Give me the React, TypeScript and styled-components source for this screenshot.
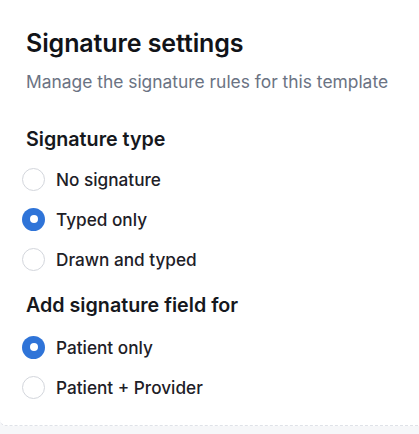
import React, { useState } from "react";
import styled, { createGlobalStyle } from "styled-components";

const Global = createGlobalStyle`
  html, body { margin: 0; padding: 0; background: #f6f7f9; }
  body { font-family: Inter, "Noto Sans", sans-serif; -webkit-font-smoothing: antialiased; }
  * { box-sizing: border-box; }
`;

const Card = styled.div`
  width: 419px;
  background: #ffffff;
  border-bottom: 1.5px dashed #dfe2e8;
  border-bottom-left-radius: 6px;
  padding: 28px 20px 18px 26px;
  display: flex;
  flex-direction: column;
`;

const Title = styled.h1`
  margin: 0;
  font-size: 25px;
  line-height: 30px;
  font-weight: 600;
  color: #111318;
  letter-spacing: -0.1px;
`;

const Subtitle = styled.p`
  margin: 13px 0 0 0;
  font-size: 17.4px;
  line-height: 22px;
  font-weight: 400;
  color: #6b7383;
  white-space: nowrap;
`;

const Section = styled.div<{ $top: number; $gap: number }>`
  margin-top: ${(p) => p.$top}px;
  display: flex;
  flex-direction: column;
  & > h2 { margin-bottom: ${(p) => p.$gap}px; }
`;

const SectionTitle = styled.h2`
  margin: 0;
  font-size: 19.7px;
  line-height: 26px;
  font-weight: 600;
  color: #16181d;
`;

const Option = styled.label`
  display: flex;
  align-items: center;
  gap: 11px;
  height: 40px;
  margin-left: -4px;
  cursor: pointer;
  font-size: 17.2px;
  font-weight: 500;
  color: #1d2027;
`;

const Circle = styled.span<{ $checked: boolean }>`
  width: 23px;
  height: 23px;
  border-radius: 50%;
  flex: none;
  display: flex;
  align-items: center;
  justify-content: center;
  background: ${(p) => (p.$checked ? "#2f74d8" : "#ffffff")};
  border: ${(p) => (p.$checked ? "none" : "1.5px solid #d3d6dc")};
  &::after {
    content: "";
    display: ${(p) => (p.$checked ? "block" : "none")};
    width: 8px;
    height: 8px;
    border-radius: 50%;
    background: #ffffff;
  }
`;

function RadioGroup({ options, initial }: { options: string[]; initial: number }) {
  const [sel, setSel] = useState(initial);
  return (
    <>
      {options.map((o, i) => (
        <Option key={o} onClick={() => setSel(i)}>
          <Circle $checked={sel === i} />
          {o}
        </Option>
      ))}
    </>
  );
}

export default function App() {
  return (
    <>
      <Global />
      <Card>
        <Title>Signature settings</Title>
        <Subtitle>Manage the signature rules for this template</Subtitle>
        <Section $top={33} $gap={7}>
          <SectionTitle>Signature type</SectionTitle>
          <RadioGroup options={["No signature", "Typed only", "Drawn and typed"]} initial={1} />
        </Section>
        <Section $top={13} $gap={9}>
          <SectionTitle>Add signature field for</SectionTitle>
          <RadioGroup options={["Patient only", "Patient + Provider"]} initial={0} />
        </Section>
      </Card>
    </>
  );
}
